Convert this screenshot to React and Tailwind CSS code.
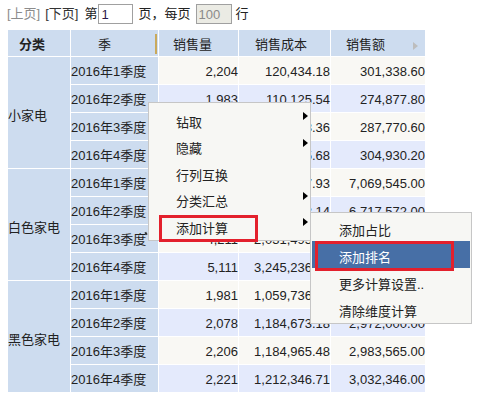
import React from "react";

const font = "font-['Liberation_Sans','Noto_Sans_CJK_SC',sans-serif]";

const HEADERS = [
  { label: "分类", pl: "pl-[11px]", bold: true },
  { label: "季", pl: "pl-[27px]", marker: true },
  { label: "销售量", pl: "pl-[14px]" },
  { label: "销售成本", pl: "pl-[16px]" },
  { label: "销售额", pl: "pl-[15px]", arrow: true },
];

const GROUPS = [
  {
    name: "小家电",
    rows: [
      ["2,204", "120,434.18", "301,338.60"],
      ["1,983", "110,125.54", "274,877.80"],
      ["2,087", "115,208.36", "287,770.60"],
      ["2,176", "121,905.68", "304,930.20"],
    ],
  },
  {
    name: "白色家电",
    rows: [
      ["4,960", "2,846,327.93", "7,069,545.00"],
      ["4,732", "2,713,058.14", "6,717,572.00"],
      ["4,211", "2,031,495.27", "5,432,780.00"],
      ["5,111", "3,245,236.45", "8,105,327.00"],
    ],
  },
  {
    name: "黑色家电",
    rows: [
      ["1,981", "1,059,736.52", "2,647,310.00"],
      ["2,078", "1,184,673.18", "2,972,000.00"],
      ["2,206", "1,184,965.48", "2,983,565.00"],
      ["2,221", "1,212,346.71", "3,032,346.00"],
    ],
  },
];

const MENU = [
  { label: "钻取", sub: true },
  { label: "隐藏", sub: true },
  { label: "行列互换" },
  { label: "分类汇总", sub: true },
  { label: "添加计算", sub: true },
];

const SUBMENU = ["添加占比", "添加排名", "更多计算设置..", "清除维度计算"];

function Arrow() {
  return (
    <span className="absolute right-[2px] top-[4px] w-0 h-0 border-y-[4px] border-y-transparent border-l-[5px] border-l-black" />
  );
}

export default function App() {
  return (
    <div className={`${font} text-[13px] text-[#222] bg-white w-[488px] h-[403px] relative overflow-hidden`}>
      {/* Pager */}
      <div className="flex items-center h-[28px] pl-[7px]">
        <span className="text-[#8c8c8c]">[上页]</span>
        <span className="ml-[5px] text-[#333]">[下页]</span>
        <span className="ml-[6px]">第</span>
        <input
          readOnly
          value="1"
          className="ml-[1px] w-[35px] h-[20px] border border-[#a0a0a0] bg-white px-[2px] text-[13px] text-[#2a1a4a] outline-none"
        />
        <span className="ml-[5px]">页，每页</span>
        <input
          readOnly
          disabled
          value="100"
          className="ml-[5px] w-[36px] h-[20px] border border-[#a0a0a0] bg-[#ebebe4] px-[2px] text-[13px] text-[#8a8a8a] outline-none"
        />
        <span className="ml-[4px]">行</span>
      </div>

      {/* Table */}
      <table className="ml-[7px] mt-[1px] border-collapse table-fixed w-[418px]">
        <colgroup>
          <col className="w-[63px]" />
          <col className="w-[88px]" />
          <col className="w-[80px]" />
          <col className="w-[92px]" />
          <col className="w-[95px]" />
        </colgroup>
        <thead>
          <tr className="bg-[#cddcef]">
            {HEADERS.map((h) => (
              <th
                key={h.label}
                className={`relative h-[27px] p-0 pt-[3px] border border-white text-left ${h.pl} ${h.bold ? "font-bold" : "font-normal"}`}
              >
                {h.label}
                {h.marker && <span className="absolute right-[1px] top-[4px] w-[2px] h-[20px] bg-[#c9a95c]" />}
                {h.arrow && (
                  <span className="absolute right-[7px] top-[12px] w-0 h-0 border-y-[4px] border-y-transparent border-l-[5px] border-l-[#bdbdbd]" />
                )}
              </th>
            ))}
          </tr>
        </thead>
        <tbody>
          {GROUPS.map((g) =>
            g.rows.map((r, i) => (
              <tr key={g.name + i} className={i % 2 === 0 ? "bg-[#f9f8f4]" : "bg-[#e4eafc]"}>
                {i === 0 && (
                  <td rowSpan={4} className="p-0 pt-[6px] border border-white bg-[#cddcef] align-middle">
                    {g.name}
                  </td>
                )}
                <td className="relative h-[28px] p-0 pt-[2px] border border-white bg-[#cddcef] whitespace-nowrap">
                  2016年{i + 1}季度
                  {g.name === "白色家电" && i === 2 && (
                    <span className="absolute right-[11px] top-[7px] w-[2px] h-[3px] bg-[#333] rotate-[-30deg]" />
                  )}
                </td>
                {r.map((v, j) => (
                  <td key={j} className="h-[28px] p-0 pt-[2px] border border-white text-right whitespace-nowrap">
                    {v}
                  </td>
                ))}
              </tr>
            ))
          )}
        </tbody>
      </table>

      {/* Context menu */}
      <div className="absolute left-[148px] top-[102px] w-[163px] h-[139px] bg-[#f7f7f4] border border-[#c6c6c6] pt-[5px]">
        {MENU.map((m) => (
          <div key={m.label} className="relative h-[26.5px] flex items-center pt-[2px] pl-[27px]">
            {m.label}
            {m.sub && <Arrow />}
          </div>
        ))}
      </div>
      <div className="absolute left-[159px] top-[215px] w-[99px] h-[27px] border-[3px] border-[#e3202c]" />

      {/* Submenu */}
      <div className="absolute left-[310px] top-[212px] w-[162px] h-[112px] bg-[#f7f7f4] border border-[#c6c6c6] pt-[1px] px-[1px]">
        {SUBMENU.map((s, i) => (
          <div
            key={s}
            className={`h-[27px] flex items-center pt-[6px] pl-[27px] ${i === 1 ? "bg-[#476fa6] text-white" : ""}`}
          >
            {s}
          </div>
        ))}
      </div>
      <div className="absolute left-[315px] top-[241px] w-[139px] h-[30px] border-[3px] border-[#e3202c]" />
    </div>
  );
}
